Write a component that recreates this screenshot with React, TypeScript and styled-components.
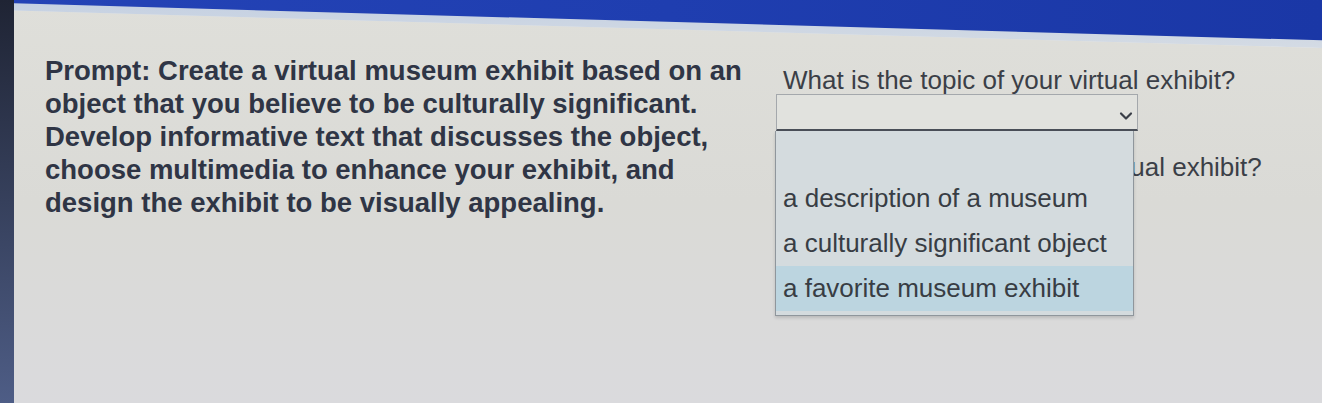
import React from "react";
import styled, { createGlobalStyle } from "styled-components";

const Global = createGlobalStyle`
  html, body { margin: 0; padding: 0; }
  body { width: 1322px; height: 403px; overflow: hidden; background: #d9d9d7; }
  #root { width: 1322px; height: 403px; }
`;

const Frame = styled.div`
  display: flex;
  width: 1322px;
  height: 403px;
  overflow: hidden;
`;

const Bezel = styled.div`
  width: 14px;
  flex: none;
  background: linear-gradient(180deg, #1f2434 0%, #36405c 50%, #4e5d86 100%);
`;

const Screen = styled.div`
  flex: 1;
  display: flex;
  flex-direction: column;
  background: linear-gradient(180deg, #dfdfda 0%, #dadad6 50%, #dadadd 100%);
  font-family: "Liberation Sans", Arial, sans-serif;
`;

const TopBar = styled.div`
  position: relative;
  height: 48px;
  flex: none;
  background: #e6e8ea;
  clip-path: polygon(0 0, 100% 0, 100% 100%, 0 22%);
  &::before {
    content: "";
    position: absolute;
    inset: 0;
    background: linear-gradient(180deg, #c4d0e2, #d4dbe4);
    clip-path: polygon(0 0, 100% 0, 100% 100%, 0 26%);
  }
  &::after {
    content: "";
    position: absolute;
    inset: 0;
    background: linear-gradient(90deg, #2443b6 0%, #1f3eb0 50%, #1a37a6 100%);
    clip-path: polygon(0 0, 100% 0, 100% 84%, 0 7%);
  }
`;

const Content = styled.div`
  display: flex;
  padding: 6px 0 0 31px;
`;

const Prompt = styled.div`
  width: 731px;
  flex: none;
  font-weight: 700;
  font-size: 27.5px;
  line-height: 33px;
  color: #2f3545;
  white-space: pre-line;
`;

const Questions = styled.div`
  display: flex;
  flex-direction: column;
  padding-top: 12px;
  width: 540px;
`;

const Label = styled.div<{ $gap?: number; $indent?: number }>`
  font-size: 26px;
  line-height: 28px;
  color: #3b3f47;
  margin-left: ${(p) => p.$indent ?? 7}px;
  margin-top: ${(p) => p.$gap ?? 0}px;
  white-space: nowrap;
`;

const SelectWrap = styled.div`
  position: relative;
  width: 362px;
`;

const SelectBox = styled.div`
  height: 37px;
  box-sizing: border-box;
  background: #e1e2de;
  border: 1px solid #a4a8ac;
  border-bottom: 2px solid #4a4f58;
  display: flex;
  align-items: center;
  justify-content: flex-end;
  padding-right: 4px;
`;

const Menu = styled.div`
  position: absolute;
  top: 100%;
  left: -1px;
  width: 359px;
  box-sizing: border-box;
  background: #d4dbde;
  border: 1px solid #8f969c;
  border-top: none;
  box-shadow: 0 2px 3px rgba(0, 0, 0, 0.15);
  z-index: 2;
  display: flex;
  flex-direction: column;
  padding-bottom: 4px;
`;

const Option = styled.div<{ $active?: boolean }>`
  height: 45px;
  display: flex;
  align-items: center;
  padding-left: 7px;
  font-size: 26px;
  color: #383d44;
  background: ${(p) => (p.$active ? "#bcd5e0" : "transparent")};
  white-space: nowrap;
`;

const Chevron = () => (
  <svg width="14" height="10" viewBox="0 0 14 10" style={{ marginTop: 8 }}>
    <path d="M2 2.5 L7 7.5 L12 2.5" fill="none" stroke="#3a3f48" strokeWidth="2.2" strokeLinecap="round" strokeLinejoin="round" />
  </svg>
);

export default function App() {
  return (
    <Frame>
      <Global />
      <Bezel />
      <Screen>
        <TopBar />
        <Content>
          <Prompt>
            {"Prompt: Create a virtual museum exhibit based on an\nobject that you believe to be culturally significant.\nDevelop informative text that discusses the object,\nchoose multimedia to enhance your exhibit, and\ndesign the exhibit to be visually appealing."}
          </Prompt>
          <Questions>
            <Label>What is the topic of your virtual exhibit?</Label>
            <SelectWrap>
              <SelectBox>
                <Chevron />
              </SelectBox>
              <Menu>
                <Option />
                <Option>a description of a museum</Option>
                <Option>a culturally significant object</Option>
                <Option $active>a favorite museum exhibit</Option>
              </Menu>
            </SelectWrap>
            <Label $gap={22} $indent={6}>What is the subject of your virtual exhibit?</Label>
          </Questions>
        </Content>
      </Screen>
    </Frame>
  );
}
